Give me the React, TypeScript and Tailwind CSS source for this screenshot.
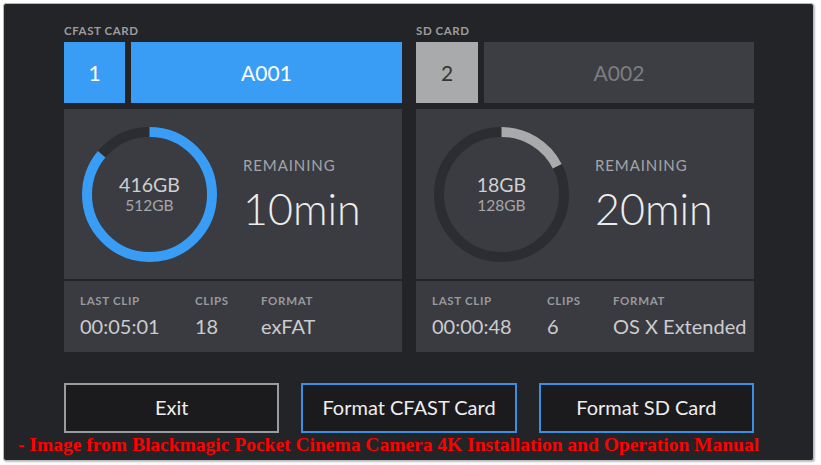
const BLUE = '#3a9df5'

function Ring({ value, color }: { value: number; color: string }) {
  const r = 62.5
  const c = 2 * Math.PI * r
  return (
    <svg width="135" height="135" viewBox="0 0 135 135" className="shrink-0">
      <circle cx="67.5" cy="67.5" r={r} fill="none" stroke="#2c2d31" strokeWidth="10" />
      <circle
        cx="67.5"
        cy="67.5"
        r={r}
        fill="none"
        stroke={color}
        strokeWidth="10"
        strokeDasharray={`${c * value} ${c}`}
        transform="rotate(-90 67.5 67.5)"
      />
    </svg>
  )
}

type Card = {
  label: string
  slot: string
  clip: string
  active: boolean
  used: string
  total: string
  value: number
  remaining: string
  lastClip: string
  clips: string
  format: string
}

const cards: Card[] = [
  {
    label: 'CFAST CARD',
    slot: '1',
    clip: 'A001',
    active: true,
    used: '416GB',
    total: '512GB',
    value: 0.86,
    remaining: '10min',
    lastClip: '00:05:01',
    clips: '18',
    format: 'exFAT',
  },
  {
    label: 'SD CARD',
    slot: '2',
    clip: 'A002',
    active: false,
    used: '18GB',
    total: '128GB',
    value: 0.175,
    remaining: '20min',
    lastClip: '00:00:48',
    clips: '6',
    format: 'OS X Extended',
  },
]

function CardColumn({ card }: { card: Card }) {
  return (
    <div className="flex flex-col w-[338px]">
      <div className="text-[11.5px] leading-[12px] font-bold tracking-[0.05em] text-[#9c9c9e]">{card.label}</div>
      <div className="flex gap-[6px] mt-[5px] h-[61px]">
        <div
          className={
            card.active
              ? 'w-[61px] flex items-center justify-center bg-[#3a9df5] text-white text-[21px]'
              : 'w-[62px] flex items-center justify-center bg-[#a9aaac] text-[#35363a] text-[21px]'
          }
        >
          {card.slot}
        </div>
        <div
          className={
            card.active
              ? 'flex-1 flex items-center justify-center bg-[#3a9df5] text-white text-[21px]'
              : 'flex-1 flex items-center justify-center bg-[#3d3e43] text-[#7c7d82] text-[21px]'
          }
        >
          {card.clip}
        </div>
      </div>
      <div className="mt-[6px] h-[170px] bg-[#3b3c41] flex items-center pl-[18px]">
        <div className="relative">
          <Ring value={card.value} color={card.active ? BLUE : '#a9aaac'} />
          <div className="absolute inset-0 flex flex-col items-center justify-center">
            <div className="text-[19.5px] leading-[23px] text-[#cfd0d2]">{card.used}</div>
            <div className="text-[15.5px] leading-[19px] text-[#a6a7aa]">{card.total}</div>
          </div>
        </div>
        <div className="ml-[26px] flex flex-col">
          <div className="text-[15px] leading-[18px] tracking-[0.06em] text-[#a3a4a7]">REMAINING</div>
          <div className="text-[43px] leading-[48px] font-light text-[#ededee] mt-[11px]">{card.remaining}</div>
        </div>
      </div>
      <div className="mt-[2px] h-[71px] bg-[#3a3b40] flex pl-[16px] pt-[13px]">
        <div className="w-[115px]">
          <div className="text-[11.5px] leading-[14px] font-bold tracking-[0.06em] text-[#98999c]">LAST CLIP</div>
          <div className="text-[20px] leading-[26px] text-[#cbccce] mt-[5px]">{card.lastClip}</div>
        </div>
        <div className="w-[66px]">
          <div className="text-[11.5px] leading-[14px] font-bold tracking-[0.06em] text-[#98999c]">CLIPS</div>
          <div className="text-[20px] leading-[26px] text-[#cbccce] mt-[5px]">{card.clips}</div>
        </div>
        <div>
          <div className="text-[11.5px] leading-[14px] font-bold tracking-[0.06em] text-[#98999c]">FORMAT</div>
          <div className="text-[20px] leading-[26px] text-[#cbccce] mt-[5px]">{card.format}</div>
        </div>
      </div>
    </div>
  )
}

export default function App() {
  return (
    <div className="w-[821px] h-[465px] bg-white pl-[3px] pt-[3px]" style={{ fontFamily: 'Lato, "Open Sans", sans-serif' }}>
      <div className="w-[811px] h-[458px] rounded-[3px] border border-[#b9b9bb] bg-[#232428] shadow-[1px_1px_2px_rgba(0,0,0,0.25)] flex flex-col pt-[21px]">
        <div className="flex gap-[14px] pl-[60px]">
          {cards.map((c) => (
            <CardColumn key={c.label} card={c} />
          ))}
        </div>
        <div className="grid grid-cols-3 gap-[22px] w-[690px] ml-[60px] mt-[31px] h-[50px]">
          <button className="border-2 border-[#9a9b9e] bg-[#1b1b1d] text-[#eeeeef] text-[20px] pb-[2px]">Exit</button>
          <button className="border-2 border-[#3a8fe0] bg-[#1b1b1d] text-[#eeeeef] text-[20px] pb-[2px]">Format CFAST Card</button>
          <button className="border-2 border-[#3a8fe0] bg-[#1b1b1d] text-[#eeeeef] text-[20px] pb-[2px]">Format SD Card</button>
        </div>
        <div
          className="ml-[14px] mt-[1px] text-[19.5px] leading-[22px] font-bold text-[#ff0000]"
          style={{ fontFamily: '"Liberation Serif", serif' }}
        >
          - Image from Blackmagic Pocket Cinema Camera 4K Installation and Operation Manual
        </div>
      </div>
    </div>
  )
}
